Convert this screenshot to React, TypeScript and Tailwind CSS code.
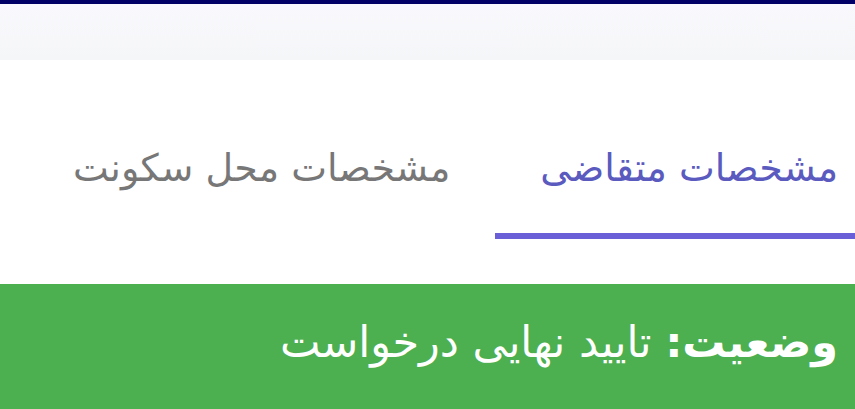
export default function App() {
  return (
    <div
      dir="rtl"
      className="w-[855px] h-[409px] overflow-hidden bg-white"
      style={{ fontFamily: '"DejaVu Sans", "Noto Sans", sans-serif' }}
    >
      <div className="h-[4px] bg-[#000066]" />
      <div className="h-[56px] bg-gradient-to-b from-[#f9f9fd] to-[#f5f6f8]" />

      <div className="h-[224px] overflow-hidden">
        <div className="flex mr-[-28px] h-full">
          <div className="flex flex-col px-[45px]">
            <div className="flex-1 flex items-center pt-[44px] text-[38px] text-[#5a5abf] whitespace-nowrap">
              مشخصات متقاضی
            </div>
            <div className="h-[6px] bg-[#6a5fd6] mb-[45px] mx-[-45px]" />
          </div>
          <div className="flex flex-col px-[45px]">
            <div className="flex-1 flex items-center pt-[44px] text-[38px] text-[#777777] whitespace-nowrap">
              مشخصات محل سکونت
            </div>
            <div className="h-[6px] mb-[45px]" />
          </div>
        </div>
      </div>

      <div className="h-[125px] bg-[#4caf50] px-[17px] pt-[30px] text-white text-[43px] leading-[56px] whitespace-nowrap">
        <span className="font-bold">وضعیت:</span> تایید نهایی درخواست
      </div>
    </div>
  );
}
